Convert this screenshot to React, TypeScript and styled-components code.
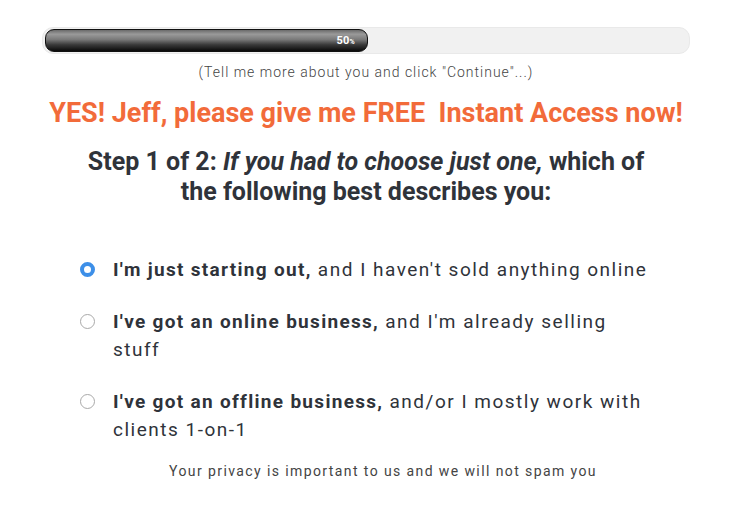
import React, { useState } from "react";
import styled, { createGlobalStyle } from "styled-components";

const Global = createGlobalStyle`
  html, body { margin: 0; padding: 0; background: #fff; }
  body { font-family: Roboto, "Liberation Sans", sans-serif; }
  * { box-sizing: border-box; }
`;

const Page = styled.div`
  width: 736px;
  padding: 27px 46px 0 42px;
  display: flex;
  flex-direction: column;
  align-items: stretch;
`;

const Track = styled.div`
  height: 27px;
  border-radius: 11px;
  background: #f1f1f1;
  border: 1px solid #e9e9e9;
  padding: 1px 2px;
  display: flex;
`;

const Fill = styled.div`
  height: 23px;
  border-radius: 9px;
  background: linear-gradient(
    to bottom,
    #6b6b6b 0%,
    #9a9a9a 20%,
    #7a7a7a 45%,
    #3a3a3a 70%,
    #0a0a0a 100%
  );
  border: 1px solid #111;
  display: flex;
  align-items: center;
  justify-content: flex-end;
  padding-right: 12px;
`;

const Pct = styled.span`
  color: #fff;
  font-size: 11px;
  font-weight: 700;
  letter-spacing: 0.2px;
  small { font-size: 7px; }
`;

const Hint = styled.p`
  margin: 10px 0 0;
  text-align: center;
  font-size: 14px;
  font-weight: 300;
  color: #444;
  letter-spacing: 1px;
  line-height: 16px;
`;

const Headline = styled.h1`
  margin: 18px 0 0;
  text-align: center;
  font-size: 27px;
  font-weight: 700;
  color: #f26b3a;
  line-height: 30px;
  white-space: pre;
`;

const StepTitle = styled.h2`
  margin: 19px auto 0;
  width: 575px;
  text-align: center;
  font-size: 25px;
  font-weight: 700;
  color: #2f333a;
  line-height: 30px;
  em { font-style: italic; }
`;

const Options = styled.div`
  margin: 49px 0 0 38px;
  display: flex;
  flex-direction: column;
  gap: 24px;
  width: 580px;
`;

const Option = styled.label`
  display: flex;
  align-items: flex-start;
  gap: 18px;
  cursor: pointer;
`;

const Radio = styled.span<{ $checked: boolean }>`
  flex: none;
  margin-top: 6px;
  width: 15px;
  height: 15px;
  border-radius: 50%;
  background: #fff;
  border: ${(p) => (p.$checked ? "4.5px solid #3d8fe8" : "1px solid #a9a9a9")};
`;

const OptionText = styled.span`
  max-width: 540px;
  font-size: 19px;
  line-height: 28px;
  color: #2f333a;
  letter-spacing: 1.5px;
  b { font-weight: 700; letter-spacing: 1.3px; }
`;

const Privacy = styled.p`
  margin: 18px 0 0;
  padding-left: 34px;
  text-align: center;
  font-size: 14px;
  color: #444;
  letter-spacing: 1.4px;
  line-height: 18px;
`;

const options: { bold: string; rest: string }[] = [
  { bold: "I'm just starting out,", rest: " and I haven't sold anything online" },
  { bold: "I've got an online business,", rest: " and I'm already selling stuff" },
  { bold: "I've got an offline business,", rest: " and/or I mostly work with clients 1-on-1" },
];

export default function App() {
  const [sel, setSel] = useState(0);
  return (
    <>
      <Global />
      <Page>
        <Track>
          <Fill style={{ width: "50.3%" }}>
            <Pct>
              50<small>%</small>
            </Pct>
          </Fill>
        </Track>
        <Hint>(Tell me more about you and click "Continue"...)</Hint>
        <Headline>{"YES! Jeff, please give me FREE  Instant Access now!"}</Headline>
        <StepTitle>
          Step 1 of 2: <em>If you had to choose just one,</em> which of the following best describes you:
        </StepTitle>
        <Options>
          {options.map((o, i) => (
            <Option key={i} onClick={() => setSel(i)}>
              <Radio $checked={sel === i} />
              <OptionText>
                <b>{o.bold}</b>
                {o.rest}
              </OptionText>
            </Option>
          ))}
        </Options>
        <Privacy>Your privacy is important to us and we will not spam you</Privacy>
      </Page>
    </>
  );
}
